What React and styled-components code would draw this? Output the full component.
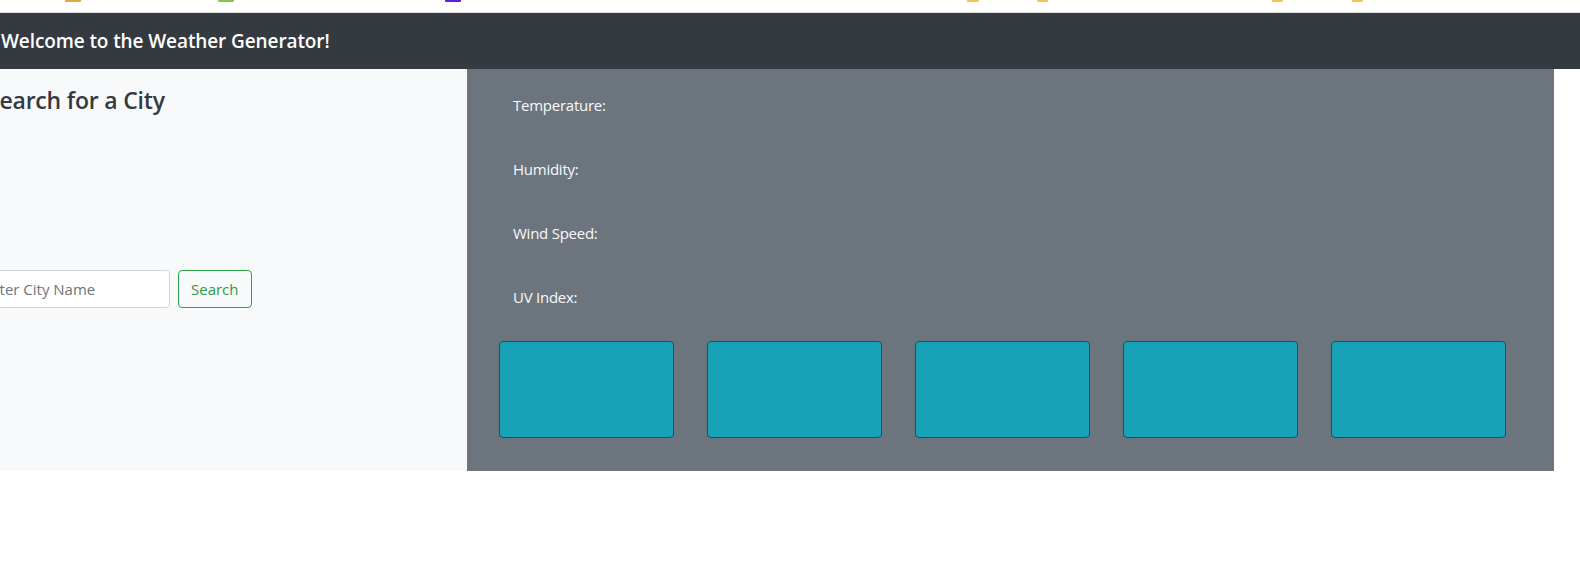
import styled, { createGlobalStyle } from 'styled-components';

/* ──────────────────────────  STYLES  ────────────────────────── */
const GlobalStyle = createGlobalStyle`
  html, body {
    margin: 0;
    padding: 0;
    background: #fff;
    overflow: hidden;
  }
  body {
    font-family: "Open Sans", "Noto Sans", Arial, sans-serif;
    color: #212529;
  }
`;

const BookmarkStrip = styled.div`
  height: 12px;
  border-bottom: 1px solid #dadce0;
  background: #fff;
  display: flex;
  align-items: flex-start;
  overflow: hidden;
`;

const BookmarkMark = styled.span`
  flex: none;
  margin-left: ${(p) => p.$gap}px;
  width: ${(p) => p.$w}px;
  height: 2px;
  background: ${(p) => p.$color};
  border-radius: 0 0 1px 1px;
`;

const Page = styled.div`
  margin-left: -40px;
`;

const Header = styled.header`
  background-color: #343a40;
  height: 56px;
  padding-left: 41px;
  display: flex;
  align-items: center;
  color: #fff;
  font-size: 19px;
  font-weight: 600;
  letter-spacing: -0.1px;
`;

const Main = styled.main`
  display: flex;
  width: 1594px;
  height: 402px;
`;

const SearchColumn = styled.section`
  width: 507px;
  background-color: #f8f9fa;
  padding-top: 17px;
  box-sizing: border-box;
`;

const SearchTitle = styled.h4`
  margin: 0 0 0 27px;
  font-size: 23px;
  font-weight: 600;
  line-height: 1.25;
  letter-spacing: -0.2px;
  color: #343a40;
`;

const SearchForm = styled.form`
  display: flex;
  gap: 8px;
  margin-top: 155px;
  padding-left: 9px;
`;

const CityInput = styled.input`
  width: 201px;
  height: 38px;
  box-sizing: border-box;
  padding: 6px 12px;
  border: 1px solid #ced4da;
  border-radius: 4px;
  background: #fff;
  font-family: inherit;
  font-size: 15px;
  color: #495057;
  outline: none;

  &::placeholder {
    color: #6c757d;
  }
`;

const SearchButton = styled.button`
  height: 38px;
  padding: 6px 12px;
  box-sizing: border-box;
  border: 1px solid #28a745;
  border-radius: 4px;
  background: transparent;
  color: #2e9a46;
  font-family: inherit;
  font-size: 15px;
  cursor: pointer;
`;

const WeatherColumn = styled.section`
  flex: 1;
  background-color: #6c757d;
  padding: 24px 0 0 32px;
  box-sizing: border-box;
  display: flex;
  flex-direction: column;
`;

const StatList = styled.div`
  display: flex;
  flex-direction: column;
  gap: 40px;
  padding-left: 14px;
`;

const StatLine = styled.p`
  margin: 0;
  font-size: 15px;
  line-height: 24px;
  letter-spacing: -0.25px;
  color: #f8f9fa;
`;

const ForecastRow = styled.div`
  display: flex;
  gap: 33px;
  margin-top: 32px;
`;

const ForecastCard = styled.div`
  width: 175px;
  height: 97px;
  box-sizing: border-box;
  background-color: #17a2b8;
  border: 1px solid #1f4d59;
  border-radius: 4px;
`;

/* ──────────────────────────  COMPONENT  ────────────────────────── */
const bookmarks = [
  { gap: 65, w: 16, color: '#e0a84a' },
  { gap: 137, w: 16, color: '#8bc34a' },
  { gap: 211, w: 16, color: '#5a1ee0' },
  { gap: 506, w: 12, color: '#e8c75a' },
  { gap: 58, w: 11, color: '#e8c75a' },
  { gap: 224, w: 11, color: '#e8c75a' },
  { gap: 69, w: 11, color: '#e8c75a' },
];

const stats = ['Temperature:', 'Humidity:', 'Wind Speed:', 'UV Index:'];

const App = () => (
  <>
    <GlobalStyle />
    <BookmarkStrip>
      {bookmarks.map((b, i) => (
        <BookmarkMark key={i} $gap={b.gap} $w={b.w} $color={b.color} />
      ))}
    </BookmarkStrip>
    <Page>
      <Header>Welcome to the Weather Generator!</Header>
      <Main>
        <SearchColumn>
          <SearchTitle>Search for a City</SearchTitle>
          <SearchForm onSubmit={(e) => e.preventDefault()}>
            <CityInput type="text" placeholder="Enter City Name" />
            <SearchButton type="submit">Search</SearchButton>
          </SearchForm>
        </SearchColumn>
        <WeatherColumn>
          <StatList>
            {stats.map((s) => (
              <StatLine key={s}>{s}</StatLine>
            ))}
          </StatList>
          <ForecastRow>
            {[0, 1, 2, 3, 4].map((d) => (
              <ForecastCard key={d} />
            ))}
          </ForecastRow>
        </WeatherColumn>
      </Main>
    </Page>
  </>
);

export default App;
